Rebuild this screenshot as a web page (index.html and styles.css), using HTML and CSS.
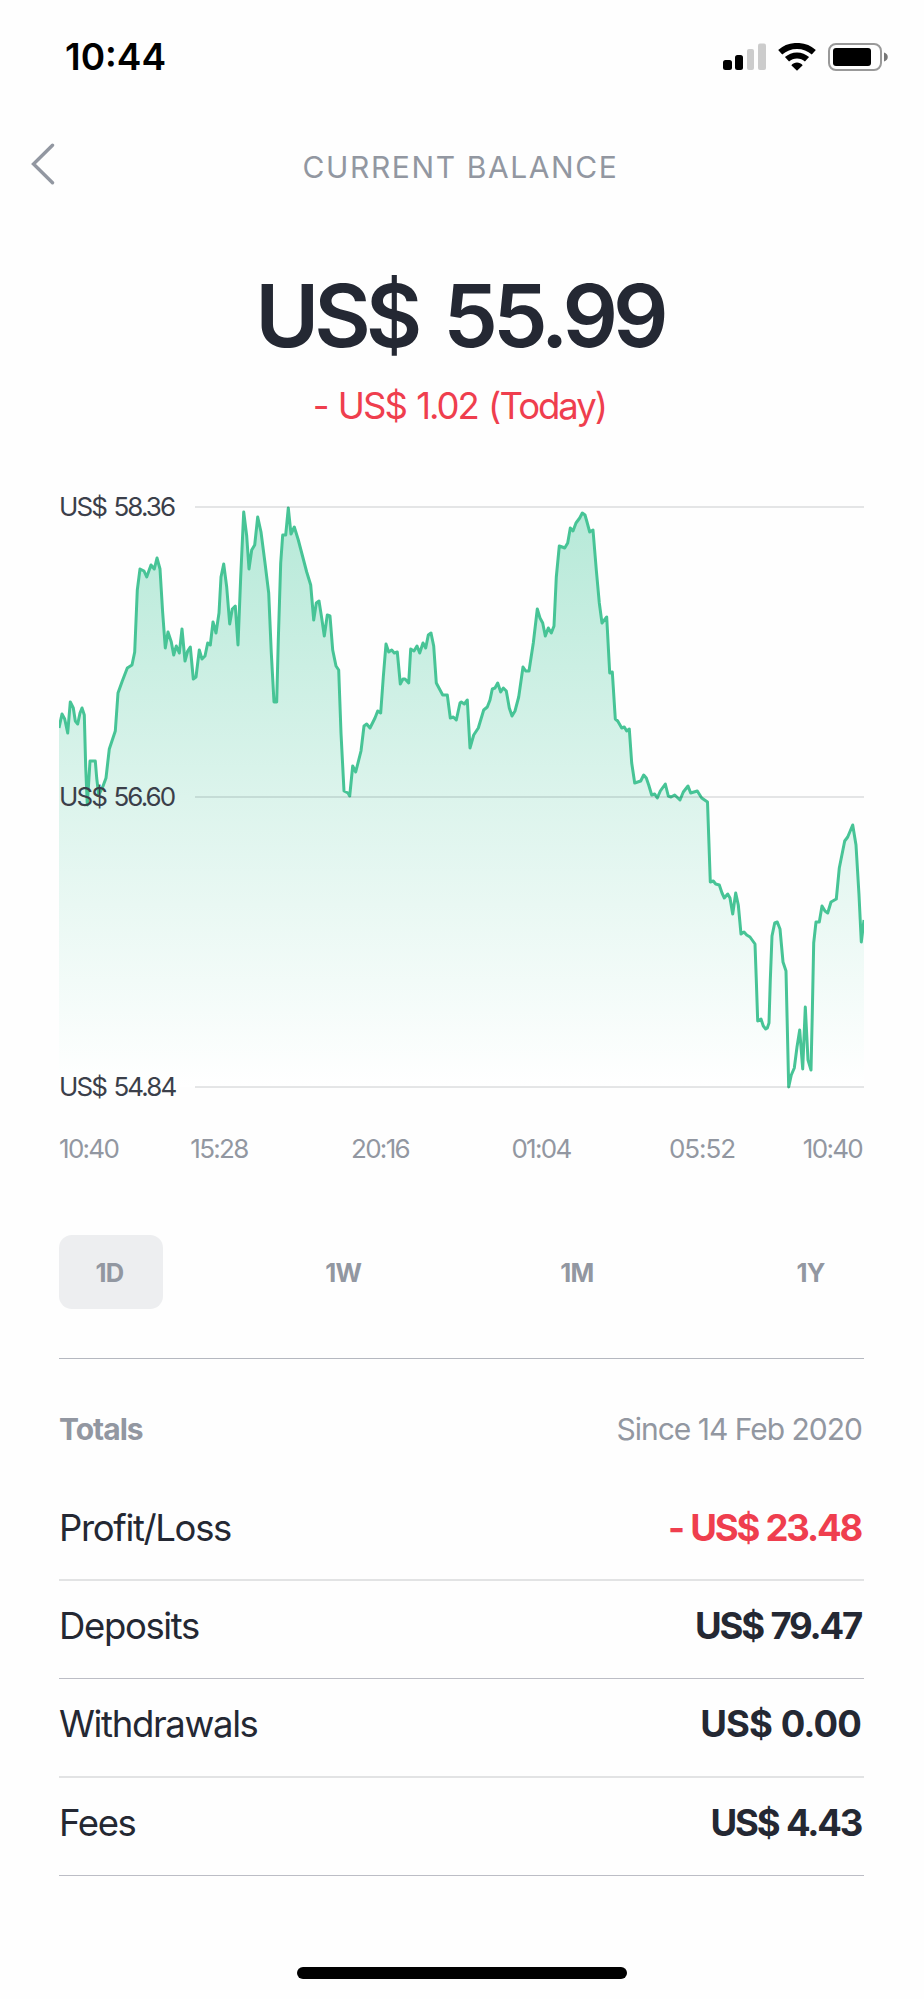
FILE: index.html
```
<!DOCTYPE html>
<html lang="en">
<head>
  <meta charset="UTF-8">
  <title>Current Balance</title>
  <meta name="viewport" content="width=device-width, initial-scale=1.0">
  <link rel="stylesheet" href="styles.css">
</head>
<body>

  <div class="status-bar">
    <span class="clock">10:44</span>
    <div class="status-icons">
      <svg class="signal" width="44" height="28" viewBox="0 0 44 28">
        <rect x="0" y="17" width="9" height="10" rx="2.5"/>
        <rect x="12" y="12" width="8" height="15" rx="2.5"/>
        <rect class="off" x="24" y="6" width="7" height="21" rx="2"/>
        <rect class="off" x="35" y="0.5" width="8" height="26.5" rx="2"/>
      </svg>
      <svg class="wifi" width="38" height="28" viewBox="0 0 38 28">
        <path class="arc" d="M2.2 9.3C11.5 0.8 26.500 0.8 35.800 9.3"/>
        <path class="arc" d="M9 16.300C14.500 11.100 23.500 11.100 29 16.300"/>
        <path d="M13.300 22.200C16.300 18.600 21.700 18.600 24.700 22.200L19 27.800Z"/>
      </svg>
      <svg class="battery" width="60" height="28" viewBox="0 0 60 28">
        <rect class="shell" x="1" y="1" width="52" height="26" rx="7"/>
        <rect x="5" y="5" width="38" height="18" rx="3"/>
        <path class="nub" d="M56 9.500C61 11 61 17 56 18.500Z"/>
      </svg>
    </div>
  </div>

  <header>
    <button class="back-btn" aria-label="Back">
      <svg width="24" height="42" viewBox="0 0 24 42"><path d="M21.500 2.200L2.500 21L21.500 39.800"/></svg>
    </button>
    <h1>CURRENT BALANCE</h1>
  </header>

  <section class="balance">
    <div class="amount">US$ 55.99</div>
    <div class="change">- US$ 1.02 (Today)</div>
  </section>

  <main>
    <svg class="chart" width="805" height="580" viewBox="0 0 805 580">
      <defs>
        <linearGradient id="fade" x1="0" y1="0" x2="0" y2="580" gradientUnits="userSpaceOnUse">
          <stop offset="0" stop-color="#b6e9d8"/>
          <stop offset="0.5" stop-color="#dcf4ec"/>
          <stop offset="1" stop-color="#ffffff"/>
        </linearGradient>
        <clipPath id="plot"><rect x="0" y="-4" width="805" height="588"/></clipPath>
      </defs>
      <g clip-path="url(#plot)">
        <path id="area"/>
        <polyline id="line"/>
      </g>
      <path class="grid-line" d="M136 0H805M136 290H805M136 580H805"/>
      <g class="price">
        <text x="0" y="8.500">US$ 58.36</text>
        <text x="0" y="298.500">US$ 56.60</text>
        <text x="0" y="588.500">US$ 54.84</text>
      </g>
    </svg>

    <div class="times">
      <span>10:40</span>
      <span>15:28</span>
      <span>20:16</span>
      <span>01:04</span>
      <span class="wide">05:52</span>
      <span>10:40</span>
    </div>

    <div class="ranges">
      <button class="active">1D</button>
      <button>1W</button>
      <button>1M</button>
      <button>1Y</button>
    </div>

    <div class="totals-head">
      <strong>Totals</strong>
      <span>Since 14 Feb 2020</span>
    </div>

    <ul class="totals">
      <li><span>Profit/Loss</span><b class="loss">- US$ 23.48</b></li>
      <li><span>Deposits</span><b>US$ 79.47</b></li>
      <li><span>Withdrawals</span><b class="zero">US$ 0.00</b></li>
      <li><span>Fees</span><b>US$ 4.43</b></li>
    </ul>
  </main>

  <div class="home-bar"></div>

  <script>
    // x,y pairs in chart units, 0 is the highest price and 580 the lowest
    const points = `
      0,221 3,207 5.7,212 8.7,226 11.3,195 14.3,201 16.3,214 18.7,217 21,206 23,201 25.3,208 26.7,260
      28.3,298 31,254 36.3,254 37.7,271 39.7,288 43.7,280 47,271 48.7,256 50.3,242 56.3,224 59,186
      63.3,174 68.3,161 73,158 75.7,145 78.3,83 81,62 85,64 87.7,70 92,58 95.3,62 98,51 101,62 103.7,106
      106.3,141 109,125 112.3,135 114.7,148 117.3,139 120.3,146 123,122 126,154 128.7,144 131.3,140
      134.3,172 137,170 140.3,143 143,152 146,149 148.7,136 151.3,138 154,115 157,126 160,106 162,70
      164.7,57 167.7,80 170.7,117 173.3,102 176.3,99 179,138 181.7,70 184.7,5 187.7,29 190,62 192.7,43
      195.7,38 198.7,10 202,25 206,56 209.7,86 212.3,146 215,195 217.7,195 219.3,133 221.7,56 223.7,28
      226.7,28 229.3,1 232,27 235.3,20 239.3,33 247.7,65 251.7,78 254.7,113 257.3,96 260,94 262.7,111
      265.3,129 268.3,108 271,109 273.7,143 277,159 279.7,163 282,226 285,284 289,286 290.7,289 293.7,259
      296.7,265 302,244 305,219 307.7,217 311,221 316,211 318.7,204 321.7,206 324.3,170 327,137 329.7,145
      332.7,143 335.3,146 338.3,145 341.3,177 344,172 346,172 349.7,176 351.7,142 355,144 358,139
      360.7,146 364,136 366.7,141 369.3,128 372,126 374.7,139 377.3,176 383.7,188 388.3,188 391.3,211
      394.3,210 397.3,213 401,196 402.3,195 405.3,197 408.3,193 411,241 414.7,228 419.3,221 424.7,203
      428.3,200 431,193 433.3,182 436,181 438.7,176 441.7,185 444.3,181 447.3,184 450.3,201 453,209
      456,204 459.7,190 464,160 466.7,164 470,164 474.3,136 478.3,102 481,111 483.7,116 486.3,129
      489.3,121 492.3,126 495,119 497.3,70 500.3,39 503.3,40 505.7,41 508.7,36 511.3,21 514,24 517,16
      520.7,11 523.3,6 526,8 528,15 530.7,25 534,23 537.3,63 540.3,96 543,116 547.7,110 550.7,166
      553.3,165 556.3,212 558.7,214 562.7,221 565.3,220 567.7,224 570.3,222 572.7,256 575.7,276
      581.7,274 584.7,268 587.3,271 589.7,278 592.7,288 595.7,287 598.3,291 601.3,284 606.3,277
      609.3,289 612,290 615.7,288 621,293 624.3,285 629,279 631.7,286 638.3,284 642.7,291 648.5,295
      651.3,375 654.3,374 656.7,377 660.3,378 663,386 665.3,391 668.7,387 671,391 673.7,407 676.7,386
      679.3,398 682,427 685,425 687.7,428 691,430 696,437 697.3,473 698.7,514 702,512 704.3,519
      706.7,522 708.3,521 710,516 711.3,473 713,429 715.7,416 718.3,415 721,422 724,455 727,464
      729.7,580 732.3,568 735.3,561 738,540 740.7,523 743.7,562 746.3,500 749,553 752,563 753.3,506
      754.7,436 757,415 760.3,415 763,399 766,404 768.7,406 772,395 777.3,392 780.3,361 785.7,334
      788.7,330 793.7,318 797,338 800,388 802.3,435 805,413`.trim().split(/\s+/);

    document.getElementById("line").setAttribute("points", points.join(" "));
    document.getElementById("area").setAttribute("d", "M0,580 L" + points.join(" L") + " L805,580 Z");
  </script>

</body>
</html>
```
FILE: styles.css
```
* {
  box-sizing: border-box;
  margin: 0;
  padding: 0;
}

body {
  width: 924px;
  height: 1999px;
  font-family: Inter, "Liberation Sans", sans-serif;
  background-color: #fefefe;
  color: #242833;
}

button {
  font-family: inherit;
  border: none;
  background: none;
}

svg {
  display: block;
}

.status-bar {
  height: 113px;
  padding: 0 36px 0 65px;
  display: flex;
  justify-content: space-between;
  align-items: center;
}

.clock {
  font-size: 37px;
  font-weight: 600;
  color: #000;
}

.status-icons {
  display: flex;
  align-items: center;
}

.signal .off {
  fill: #cccccc;
}

.wifi {
  margin: 0 12px 0 11px;
}

.wifi .arc {
  fill: none;
  stroke: #000;
  stroke-width: 6;
}

.battery .shell {
  fill: none;
  stroke: #999;
  stroke-width: 2;
}

.battery .nub {
  fill: #777;
}

header {
  height: 107px;
  padding-left: 31px;
  display: flex;
  align-items: center;
}

.back-btn {
  width: 24px;
  margin-top: -5px;
}

.back-btn path {
  fill: none;
  stroke: #9297a1;
  stroke-width: 3.4;
  stroke-linecap: round;
}

h1 {
  flex: 1;
  padding-right: 58px;
  text-align: center;
  font-size: 30px;
  font-weight: 400;
  letter-spacing: 1.6px;
  color: #9297a1;
}

.balance {
  padding: 48px 5px 0 0;
  height: 287px;
  text-align: center;
}

.amount {
  font-size: 87px;
  font-weight: 600;
  line-height: 96px;
  letter-spacing: -5px;
  word-spacing: 9px;
}

.change {
  margin-top: 18px;
  font-size: 36.5px;
  line-height: 48px;
  letter-spacing: -2px;
  word-spacing: 2px;
  color: #ef3e4e;
}

main {
  width: 805px;
  margin: 0 0 0 59px;
}

.chart {
  overflow: visible;
}

#area {
  fill: url(#fade);
}

#line {
  fill: none;
  stroke: #47c496;
  stroke-width: 3;
  stroke-linejoin: round;
}

.grid-line {
  stroke: rgba(20, 30, 35, 0.11);
  stroke-width: 2;
}

.price {
  font-size: 26px;
  letter-spacing: -1.9px;
  word-spacing: 2px;
  fill: #3b3f4a;
}

.times {
  height: 41px;
  margin-top: 41px;
  display: grid;
  grid-template-columns: 1fr 2fr 2fr 2fr 2fr 1fr;
  font-size: 26px;
  line-height: 41px;
  letter-spacing: -1.7px;
  text-align: center;
  color: #9297a1;
}

.times span {
  padding-right: 2px;
}

.times span:first-child {
  text-align: left;
}

.times span:last-child {
  text-align: right;
}

.times .wide {
  letter-spacing: -1.1px;
}

.ranges {
  height: 124px;
  margin-top: 66px;
  padding-bottom: 49px;
  border-bottom: 1px solid #b5b8c0;
  display: flex;
  justify-content: space-between;
}

.ranges button {
  width: 104px;
  height: 74px;
  padding-right: 3px;
  border-radius: 13px;
  font-size: 25.5px;
  font-weight: 700;
  letter-spacing: -0.8px;
  color: #9297a1;
}

.ranges .active {
  background-color: #edeef0;
}

.totals-head {
  height: 124px;
  padding: 15px 2px 0 0;
  display: flex;
  justify-content: space-between;
  align-items: center;
  font-size: 30px;
  letter-spacing: -1px;
  color: #9297a1;
}

.totals {
  list-style: none;
}

.totals li {
  height: 98px;
  padding: 0 3px 8px 0;
  border-bottom: 1px solid #bcbdc5;
  display: flex;
  justify-content: space-between;
  align-items: center;
  font-size: 36.5px;
  letter-spacing: -1.35px;
}

.totals li:nth-child(odd) {
  padding-bottom: 7px;
  border-bottom: 2px solid #e2e3e4;
}

.totals li:nth-child(3) {
  height: 99px;
}

.totals b {
  letter-spacing: -2.2px;
  word-spacing: 1px;
}

.totals .loss {
  color: #ef3e4e;
}

.totals .zero {
  letter-spacing: -0.9px;
}

.home-bar {
  width: 330px;
  height: 12px;
  margin: 91px auto 0;
  border-radius: 6px;
  background-color: #000;
}
```
